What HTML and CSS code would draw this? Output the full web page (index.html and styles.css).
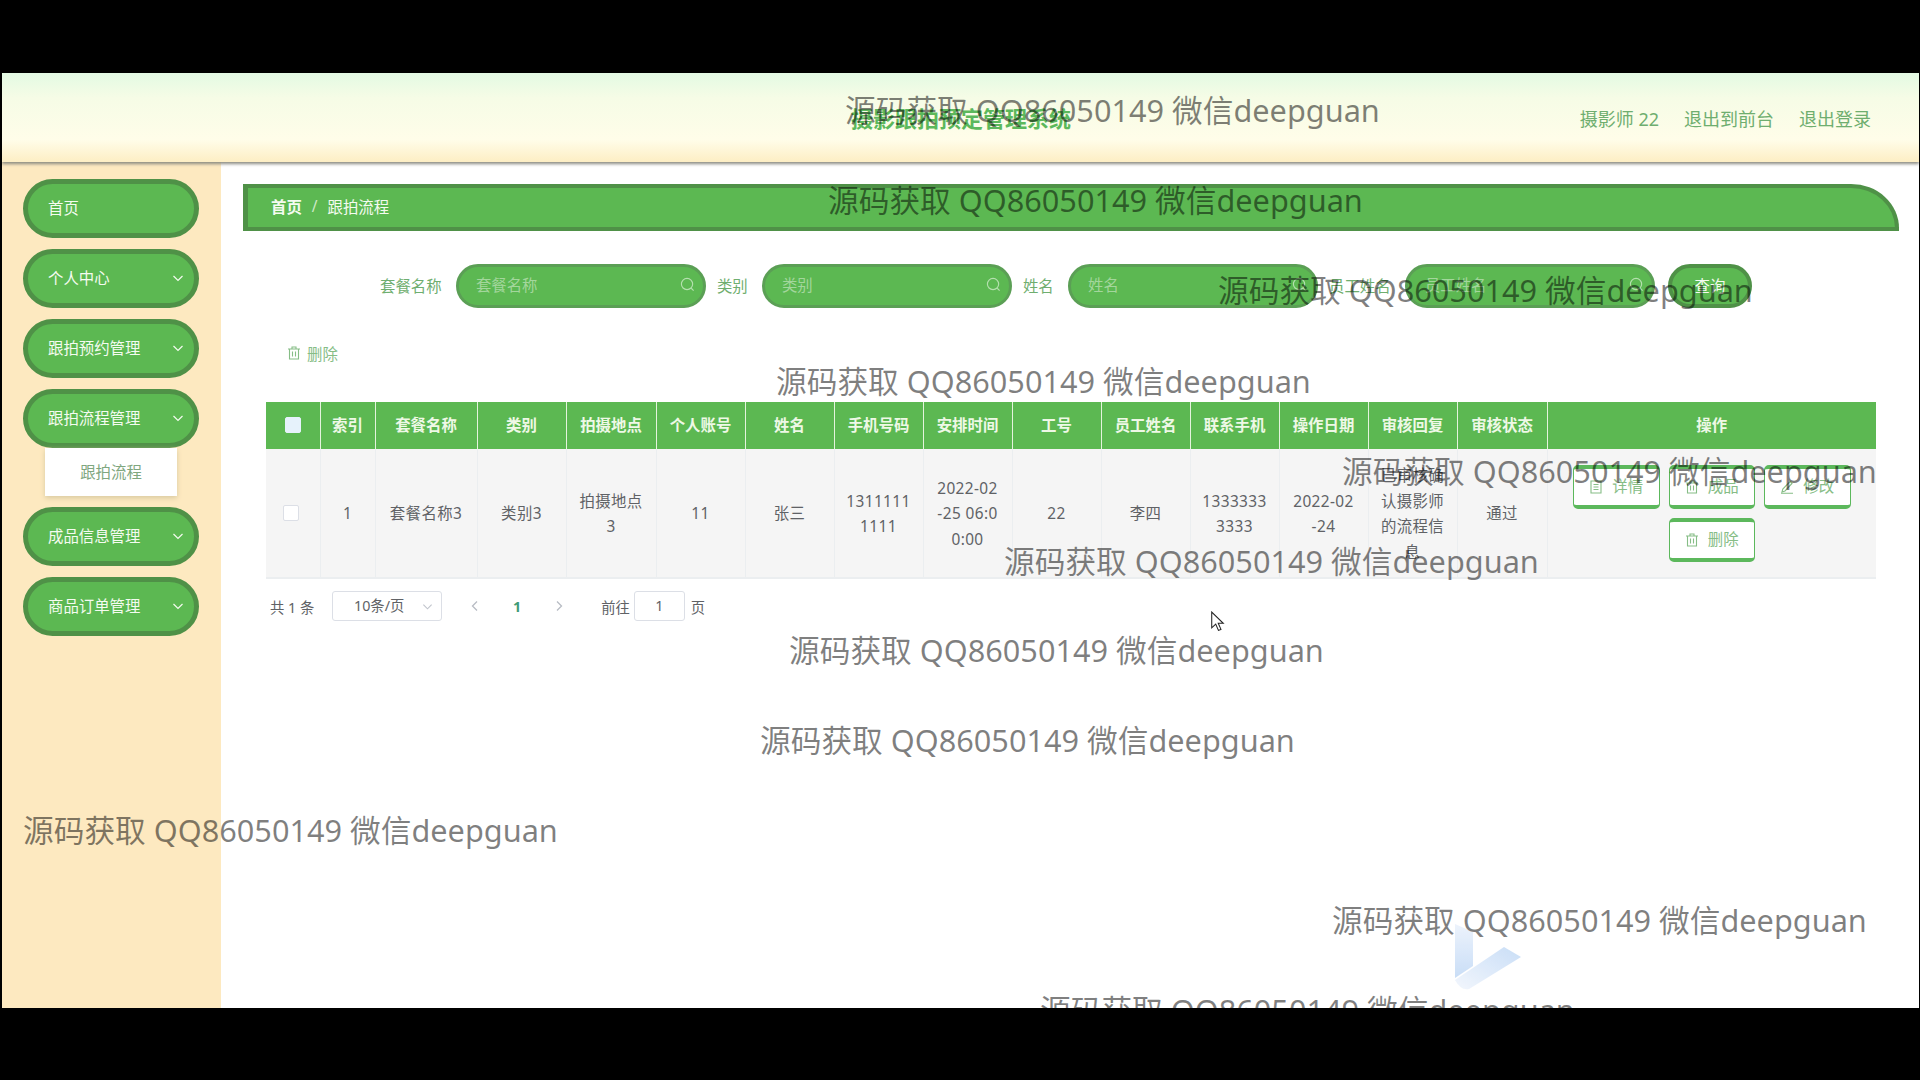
FILE: index.html
```html
<!DOCTYPE html>
<html lang="zh-CN">
<head>
    <meta charset="UTF-8">
    <meta name="viewport" content="width=device-width, initial-scale=1.0">
    <title>摄影跟拍预定管理系统</title>
    <link rel="stylesheet" href="styles.css">
</head>
<body>
    <svg class="icon-defs" width="0" height="0">
        <symbol id="i-arrow" viewBox="0 0 12 12"><path d="M1.5 4l4.5 4.5L10.500 4" fill="none" stroke="currentColor" stroke-width="1.200"/></symbol>
        <symbol id="i-search" viewBox="0 0 16 16"><circle cx="7.500" cy="7.500" r="6" fill="none" stroke="currentColor" stroke-width="1.200"/><path d="M12 12l2.500 2.500" stroke="currentColor" stroke-width="1.200"/></symbol>
        <symbol id="i-delete" viewBox="0 0 14 14"><path d="M1 3h12M5 3V1h4v2M2.500 3v10h9V3M5.500 5.500v5M8.500 5.500v5" fill="none" stroke="currentColor" stroke-width="1.100"/></symbol>
        <symbol id="i-doc" viewBox="0 0 14 14"><path d="M2 1h10v12H2zM4.500 4.500h5M4.500 7h5M4.500 9.500h5" fill="none" stroke="currentColor" stroke-width="1.100"/></symbol>
        <symbol id="i-edit" viewBox="0 0 14 14"><path d="M10 1.500l2 2-7 7.500-3 1 .8-3zM1 13.300h12" fill="none" stroke="currentColor" stroke-width="1.100"/></symbol>
    </svg>
    <div class="frame">
        <header class="top">
            <div class="title">摄影跟拍预定管理系统</div>
            <div class="top-links">
                <span>摄影师 22</span>
                <span>退出到前台</span>
                <span>退出登录</span>
            </div>
        </header>
        <div class="body-wrap">
            <aside class="side">
                <div class="pill">首页</div>
                <div class="pill">个人中心<svg class="pill-arrow"><use href="#i-arrow"/></svg></div>
                <div class="pill">跟拍预约管理<svg class="pill-arrow"><use href="#i-arrow"/></svg></div>
                <div class="pill open">跟拍流程管理<svg class="pill-arrow"><use href="#i-arrow"/></svg></div>
                <div class="sub">跟拍流程</div>
                <div class="pill">成品信息管理<svg class="pill-arrow"><use href="#i-arrow"/></svg></div>
                <div class="pill">商品订单管理<svg class="pill-arrow"><use href="#i-arrow"/></svg></div>
            </aside>
            <main class="main">
                <div class="crumb"><b>首页</b><i>/</i><span>跟拍流程</span></div>
                <form class="filters">
                    <label>套餐名称</label>
                    <div class="field"><input placeholder="套餐名称"><svg class="field-icon"><use href="#i-search"/></svg></div>
                    <label>类别</label>
                    <div class="field"><input placeholder="类别"><svg class="field-icon"><use href="#i-search"/></svg></div>
                    <label>姓名</label>
                    <div class="field"><input placeholder="姓名"><svg class="field-icon"><use href="#i-search"/></svg></div>
                    <label>员工姓名</label>
                    <div class="field"><input placeholder="员工姓名"><svg class="field-icon"><use href="#i-search"/></svg></div>
                    <button type="button" class="query">查询</button>
                </form>
                <div class="toolbar"><svg class="btn-icon"><use href="#i-delete"/></svg>删除</div>
                <table class="grid">
                    <thead>
                        <tr>
                            <th><span class="check head"></span></th>
                            <th>索引</th><th>套餐名称</th><th>类别</th><th>拍摄地点</th><th>个人账号</th><th>姓名</th><th>手机号码</th>
                            <th>安排时间</th><th>工号</th><th>员工姓名</th><th>联系手机</th><th>操作日期</th><th>审核回复</th><th>审核状态</th><th>操作</th>
                        </tr>
                    </thead>
                    <tbody>
                        <tr>
                            <td><span class="check"></span></td>
                            <td>1</td><td>套餐名称3</td><td>类别3</td><td>拍摄地点3</td><td>11</td><td>张三</td><td>13111111111</td>
                            <td>2022-02-25 06:00:00</td><td>22</td><td>李四</td><td>13333333333</td><td>2022-02-24</td>
                            <td>已审核确认摄影师的流程信息</td><td>通过</td>
                            <td class="action-cell">
                                <div class="actions">
                                    <button type="button"><svg class="btn-icon"><use href="#i-doc"/></svg>详情</button>
                                    <button type="button"><svg class="btn-icon"><use href="#i-delete"/></svg>成品</button>
                                    <button type="button"><svg class="btn-icon"><use href="#i-edit"/></svg>修改</button>
                                    <button type="button"><svg class="btn-icon"><use href="#i-delete"/></svg>删除</button>
                                </div>
                            </td>
                        </tr>
                    </tbody>
                </table>
                <div class="pager">
                    <span class="total">共 1 条</span>
                    <div class="size">10条/页<svg class="size-arrow"><use href="#i-arrow"/></svg></div>
                    <svg class="page-arrow prev" viewBox="0 0 12 12"><path d="M8 1.500L3.500 6 8 10.500" fill="none" stroke="currentColor" stroke-width="1.300"/></svg>
                    <b class="current">1</b>
                    <svg class="page-arrow next" viewBox="0 0 12 12"><path d="M4 1.500L8.500 6 4 10.500" fill="none" stroke="currentColor" stroke-width="1.300"/></svg>
                    <span class="goto">前往</span>
                    <div class="jump">1</div>
                    <span>页</span>
                </div>
            </main>
        </div>

        <svg class="player-logo" viewBox="0 0 76 68">
            <defs>
                <linearGradient id="lg1" x1="0" y1="1" x2="0" y2="0"><stop offset="0" stop-color="#bcd6f5"/><stop offset="1" stop-color="#e9f1fc"/></linearGradient>
                <linearGradient id="lg2" x1="0" y1="1" x2="1" y2="0"><stop offset="0" stop-color="#f0f5fd"/><stop offset="1" stop-color="#bcd6f5"/></linearGradient>
            </defs>
            <path d="M0 2l18 8v34L0 56z" fill="url(#lg1)"/>
            <path d="M0 58l49-33 17 10-52 32q-8 2-14-9z" fill="url(#lg2)"/>
        </svg>
        <svg class="cursor" viewBox="0 0 13 20"><path d="M1 1v15l3.800-3.500 2.600 6 2.400-1-2.600-5.800H12z" fill="#fff" stroke="#222" stroke-width="1"/></svg>

        <div class="wm wm-1">源码获取 QQ86050149 微信deepguan</div>
        <div class="wm wm-2">源码获取 QQ86050149 微信deepguan</div>
        <div class="wm wm-3">源码获取 QQ86050149 微信deepguan</div>
        <div class="wm wm-4">源码获取 QQ86050149 微信deepguan</div>
        <div class="wm wm-5">源码获取 QQ86050149 微信deepguan</div>
        <div class="wm wm-6">源码获取 QQ86050149 微信deepguan</div>
        <div class="wm wm-7">源码获取 QQ86050149 微信deepguan</div>
        <div class="wm wm-8">源码获取 QQ86050149 微信deepguan</div>
        <div class="wm wm-9">源码获取 QQ86050149 微信deepguan</div>
        <div class="wm wm-10">源码获取 QQ86050149 微信deepguan</div>
        <div class="wm wm-11">源码获取 QQ86050149 微信deepguan</div>
    </div>
</body>
</html>
```

FILE: styles.css
```css
* {
    box-sizing: border-box;
}
body {
    margin: 0;
    padding: 73px 1px 72px 2px;
    height: 1080px;
    overflow: hidden;
    background: #000;
    font-family: "Noto Sans", "Noto Sans CJK SC", sans-serif;
    font-size: 15.400px;
    color: #606266;
}
.icon-defs {
    position: absolute;
}
.frame {
    position: relative;
    height: 935px;
    overflow: hidden;
    background: #fff;
}

/* header */
.top {
    position: relative;
    z-index: 2;
    display: flex;
    align-items: center;
    height: 89px;
    padding: 0 48px 0 849px;
    background: linear-gradient(180deg, #e3fae3 0, #f6fce6 28%, #fffde9 75%, #fdeec4 100%);
    box-shadow: 0 2px 3px #8a8a80;
}
.title {
    font-size: 22px;
    line-height: 30px;
    font-weight: 700;
    color: #5cb85c;
}
.top-links {
    display: flex;
    gap: 25px;
    margin-left: auto;
    font-size: 18px;
    color: #6fae6f;
}

.body-wrap {
    display: flex;
    height: 846px;
}

/* sidebar */
.side {
    flex: none;
    width: 219px;
    padding: 17px 22px 0 21px;
    background: #fde9c0;
}
.pill {
    display: flex;
    align-items: center;
    justify-content: space-between;
    height: 59px;
    margin-bottom: 11px;
    padding: 0 10px 2px 20px;
    background: #5cb852;
    border: 5px solid #4f9147;
    border-radius: 30px;
    color: #f4fbf0;
}
.pill.open {
    margin-bottom: 0;
}
.pill-arrow {
    width: 12px;
    height: 12px;
}
.sub {
    width: 132px;
    height: 48px;
    margin: 0 0 11px 22px;
    line-height: 49px;
    text-align: center;
    background: #fff;
    color: #7fa77f;
    box-shadow: 0 2px 5px #d8c9a0;
}

/* main */
.main {
    flex: 1;
    min-width: 0;
    padding: 22px 20px 0 22px;
}
.crumb {
    display: flex;
    align-items: center;
    height: 47px;
    padding: 0 0 2px 23px;
    background: #5cb852;
    border: 4px solid #4f9147;
    border-left-width: 5px;
    border-top-right-radius: 48px 44px;
    color: #f4fbf0;
}
.crumb i {
    margin: 0 10px;
    font-style: normal;
    color: #cfe8c8;
}
.filters {
    display: flex;
    align-items: center;
    height: 44px;
    margin-top: 33px;
    padding-left: 137px;
}
.filters label {
    margin: 0 14.300px 2px 0;
    white-space: nowrap;
    color: #6fae6f;
}
.field {
    position: relative;
    width: 250px;
    height: 44px;
    margin-right: 11px;
}
.field input {
    width: 100%;
    height: 100%;
    padding: 0 36px 2px 17px;
    font: inherit;
    background: #5cb852;
    border: 3px solid #5b9f55;
    border-radius: 22px;
    outline: none;
}
.field input::placeholder {
    color: #a3d69c;
}
.field-icon {
    position: absolute;
    top: 13px;
    right: 11px;
    width: 15px;
    height: 15px;
    color: #b5e0af;
}
.query {
    width: 84px;
    height: 44px;
    margin-left: 2px;
    padding: 0 0 2px;
    font: inherit;
    color: #f4fbf0;
    background: #5cb852;
    border: 4px solid #4f9147;
    border-radius: 22px;
}
.toolbar {
    display: flex;
    align-items: center;
    height: 20px;
    margin: 35px 0 39px;
    padding-left: 44px;
    color: #86bd86;
}
.toolbar .btn-icon {
    margin-right: 6px;
}
.btn-icon {
    width: 14px;
    height: 14px;
    margin-right: 9px;
}

/* table */
.grid {
    width: 1610px;
    margin-left: 23px;
    table-layout: fixed;
    border-collapse: collapse;
    text-align: center;
}
.grid th {
    height: 47px;
    padding: 0 0 2px;
    background: #5cb852;
    color: #eef8e6;
    font-weight: 700;
    border-left: 1px solid #e4f3dd;
}
.grid th:first-child {
    width: 54px;
    border-left: none;
}
.grid th:nth-child(2) { width: 55px; }
.grid th:nth-child(3) { width: 102px; }
.grid th:nth-child(4) { width: 89px; }
.grid th:nth-child(5) { width: 90px; }
.grid th:nth-child(n+6) { width: 89px; }
.grid th:nth-child(15) { width: 90px; }
.grid th:last-child { width: auto; }
.grid td {
    padding: 2px 11.500px 0;
    line-height: 25.500px;
    letter-spacing: .4px;
    word-break: break-all;
    background: #f5f5f5;
    border-left: 1px solid #ebeef0;
    border-bottom: 2px solid #ebeef0;
}
.grid td:first-child {
    border-left: none;
    padding: 0 12px 0 17px;
}
.grid td.action-cell {
    padding: 16px 12px 15px;
}
.check {
    display: block;
    width: 16px;
    height: 16px;
    background: #fff;
    border: 1px solid #dcdfe6;
    border-radius: 2px;
}
.check.head {
    margin: 0 auto;
    background: #e6f2fb;
    border-color: #e6f2fb;
}
.actions {
    display: flex;
    flex-wrap: wrap;
    justify-content: center;
    gap: 9px;
}
.actions button {
    display: flex;
    align-items: center;
    justify-content: center;
    width: 87px;
    height: 44px;
    padding: 0;
    font: inherit;
    color: #86bd86;
    background: #fff;
    border: 1px solid #5cb85c;
    border-width: 4px 1px;
    border-radius: 5px;
}
.actions button:nth-child(even) {
    width: 86px;
}

/* pagination */
.pager {
    display: flex;
    align-items: center;
    height: 30px;
    margin: 12px 0 0 27px;
    font-size: 14.300px;
}
.total {
    width: 62px;
}
.size {
    position: relative;
    width: 110px;
    height: 30px;
    padding-left: 21px;
    line-height: 28px;
    background: #fff;
    border: 1px solid #dcdfe6;
    border-radius: 3px;
}
.size-arrow {
    position: absolute;
    top: 9px;
    right: 8px;
    width: 11px;
    height: 11px;
    color: #c0c4cc;
}
.page-arrow {
    width: 12px;
    height: 12px;
    color: #b8bcc4;
}
.prev {
    margin-left: 27px;
}
.current {
    margin: 0 32px 0 32px;
    color: #3f9b77;
}
.next {
    margin-right: 36px;
}
.goto {
    margin-right: 4px;
}
.jump {
    width: 51px;
    height: 30px;
    margin-right: 6px;
    line-height: 28px;
    text-align: center;
    background: #fff;
    border: 1px solid #dcdfe6;
    border-radius: 3px;
}

/* things lying over the page */
.player-logo {
    position: absolute;
    z-index: 4;
    left: 1453px;
    top: 849px;
    width: 76px;
    height: 68px;
    opacity: .8;
}
.cursor {
    position: absolute;
    z-index: 4;
    left: 1208px;
    top: 538px;
    width: 15px;
    height: 21px;
}
.wm {
    position: absolute;
    z-index: 5;
    white-space: nowrap;
    font-size: 30.700px;
    line-height: 40px;
    color: rgba(0, 0, 0, .5);
    pointer-events: none;
}
.wm-1 { left: 843px; top: 17px; }
.wm-2 { left: 826px; top: 107px; }
.wm-3 { left: 1216px; top: 197px; }
.wm-4 { left: 774px; top: 288px; }
.wm-5 { left: 1340px; top: 378px; }
.wm-6 { left: 1002px; top: 468px; }
.wm-7 { left: 787px; top: 557px; }
.wm-8 { left: 758px; top: 647px; }
.wm-9 { left: 21px; top: 737px; }
.wm-10 { left: 1330px; top: 827px; }
.wm-11 { left: 1038px; top: 917px; }
```
